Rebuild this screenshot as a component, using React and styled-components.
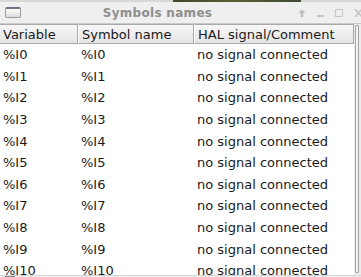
import React from 'react'
import styled, { createGlobalStyle } from 'styled-components'

const Global = createGlobalStyle`
  html, body { margin:0; padding:0; background:#ececec; overflow:hidden; }
  * { box-sizing:border-box; }
`

const rows = Array.from({ length: 11 }, (_, i) => ({ v: `%I${i}`, s: `%I${i}`, c: 'no signal connected' }))

const Symbols = () => {
  return (
    <>
      <Global />
      <Window>
        <Desktop>
          <DeskLeft />
          <DeskMid />
          <DeskRight />
        </Desktop>
        <TitleBar>
          <WinIcon />
          <Title>Symbols names</Title>
          <Buttons>
            <svg width="8" height="8" viewBox="0 0 8 8">
              <path d="M4 0.5 L7.5 4 H5.3 V8 H2.7 V4 H0.5 Z" fill="#bdbdbd" />
            </svg>
            <svg width="7" height="8" viewBox="0 0 7 8">
              <rect x="0" y="6" width="7" height="2" fill="#c6c6c6" />
            </svg>
            <svg width="8" height="8" viewBox="0 0 8 8">
              <rect x="0.5" y="0.5" width="7" height="7" fill="none" stroke="#c6c6c6" strokeWidth="1" />
            </svg>
            <svg width="9" height="8" viewBox="0 0 9 8">
              <path d="M1 0 L8 8 M8 0 L1 8" stroke="#c6c6c6" strokeWidth="1.6" />
            </svg>
          </Buttons>
        </TitleBar>
        <Body>
          <Table>
            <HeadRow>
              <HeadCell w={78}>Variable</HeadCell>
              <HeadCell w={116}>Symbol name</HeadCell>
              <HeadCell w={160}>HAL signal/Comment</HeadCell>
            </HeadRow>
            {rows.map((r) => (
              <Row key={r.v}>
                <Cell w={78}>{r.v}</Cell>
                <Cell w={116}>{r.s}</Cell>
                <Cell w={160}>{r.c}</Cell>
              </Row>
            ))}
          </Table>
          <ScrollBar>
            <Thumb />
          </ScrollBar>
        </Body>
        <BottomBar>
          <Grip />
        </BottomBar>
      </Window>
    </>
  )
}

const Window = styled.div`
  width:361px;
  height:277px;
  display:flex;
  flex-direction:column;
  background:#ececec;
  font-family:"DejaVu Sans", Verdana, sans-serif;
  overflow:hidden;
`
const Desktop = styled.div`
  display:flex;
  height:2px;
  flex-shrink:0;
`
const DeskLeft = styled.div`
  width:173px;
  background:#d8d8d8;
`
const DeskMid = styled.div`
  width:128px;
  background:linear-gradient(90deg,#3f4a2c,#56602f,#3d4a35);
`
const DeskRight = styled.div`
  flex:1;
  background:#d8d8d8;
`
const TitleBar = styled.div`
  height:21px;
  flex-shrink:0;
  display:flex;
  align-items:center;
  padding:0 0 0 5px;
  background:#efefef;
`
const WinIcon = styled.div`
  width:16px;
  height:11px;
  border:1px solid #9a9a9a;
  border-top:2px solid #6b7480;
  border-radius:2px;
  background:linear-gradient(#fdfdfd,#dcdcdc);
`
const Title = styled.div`
  flex:1;
  text-align:center;
  font-weight:bold;
  font-size:12px;
  color:#8e8e8e;
  padding-right:4px;
  letter-spacing:0.3px;
`
const Buttons = styled.div`
  display:flex;
  align-items:center;
  gap:11px;
  margin-right:-2px;
  padding-top:1px;
`
const Body = styled.div`
  flex:1;
  display:flex;
  background:#fff;
  border-top:1px solid #c9c9c9;
  min-height:0;
  overflow:hidden;
`
const Table = styled.div`
  width:354px;
  display:flex;
  flex-direction:column;
`
const HeadRow = styled.div`
  display:flex;
  height:20px;
  flex-shrink:0;
`
const HeadCell = styled.div`
  width:${(p) => p.w}px;
  height:20px;
  padding:0 0 0 3px;
  display:flex;
  align-items:center;
  font-size:13px;
  color:#1a1a1a;
  background:linear-gradient(#f7f7f7,#e4e4e4);
  border:1px solid #a9a9a9;
  border-left:1px solid #fff;
  &:first-child { border-left:none; }
`
const Row = styled.div`
  display:flex;
  height:21.6px;
  flex-shrink:0;
`
const Cell = styled.div`
  width:${(p) => p.w}px;
  padding:0 0 0 3px;
  display:flex;
  align-items:center;
  font-size:13px;
  color:#1a1a1a;
  white-space:nowrap;
`
const ScrollBar = styled.div`
  flex:1;
  background:#ececec;
  padding:1px 2px 2px 1px;
  display:flex;
`
const Thumb = styled.div`
  flex:1;
  border:1px solid #a3a3a3;
  border-radius:1px;
  background:#f4f4f4;
`
const BottomBar = styled.div`
  height:2px;
  flex-shrink:0;
  background:#ececec;
  border-top:1px solid #d6d6d6;
  padding-left:5px;
  display:flex;
  align-items:flex-end;
`
const Grip = styled.div`
  width:10px;
  height:1px;
  background:#8a8f96;
`

export default Symbols
